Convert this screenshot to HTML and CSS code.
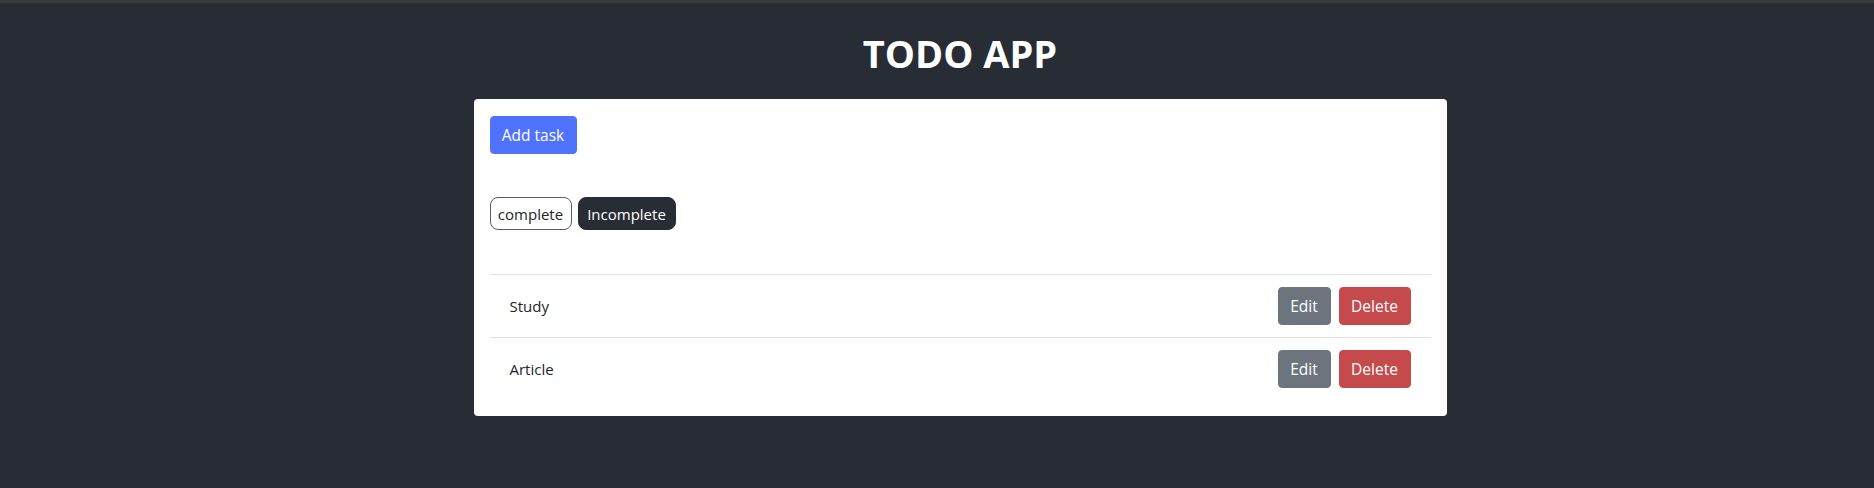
FILE: index.html
```html
<!DOCTYPE html>
<html lang="en">
<head>
<meta charset="utf-8">
<title>TODO APP</title>
<link rel="stylesheet" href="styles.css">
</head>
<body>
  <h1 class="title">TODO APP</h1>
  <main class="card">
    <button class="btn btn-primary">Add task</button>
    <div class="filters">
      <button class="chip chip-outline">complete</button>
      <button class="chip chip-dark">Incomplete</button>
    </div>
    <ul class="list">
      <li class="item">
        <span class="item-text">Study</span>
        <div class="actions">
          <button class="btn btn-secondary">Edit</button>
          <button class="btn btn-danger">Delete</button>
        </div>
      </li>
      <li class="item">
        <span class="item-text">Article</span>
        <div class="actions">
          <button class="btn btn-secondary">Edit</button>
          <button class="btn btn-danger">Delete</button>
        </div>
      </li>
    </ul>
  </main>
</body>
</html>
```
FILE: styles.css
```css
* { box-sizing: border-box; }
html, body { height: 100%; }
body {
  margin: 0;
  padding-left: 46px;
  border-top: 3px solid #3a3a3b;
  background: #282c35;
  font-family: "Open Sans", "Noto Sans", sans-serif;
  color: #212529;
  display: flex;
  flex-direction: column;
  align-items: center;
}
.title {
  margin: 26px 0 22px;
  font-size: 38px;
  line-height: 48px;
  font-weight: 700;
  color: #ffffff;
}
.card {
  width: 973px;
  background: #ffffff;
  border-radius: 4px;
  padding: 17px 16px 16px;
  display: flex;
  flex-direction: column;
  align-items: flex-start;
}
.btn {
  font-family: inherit;
  font-size: 15.5px;
  line-height: 24px;
  height: 38px;
  padding: 6px 0;
  border: 1px solid transparent;
  border-radius: 4px;
  color: #ffffff;
  cursor: pointer;
}
.btn-primary { background: #4f72ff; border-color: #4f72ff; width: 87px; }
.btn-secondary { background: #6c757d; border-color: #6c757d; width: 53px; }
.btn-danger { background: #c44a4b; border-color: #c44a4b; width: 72px; }
.filters {
  margin-top: 43px;
  display: flex;
  gap: 6px;
}
.chip {
  font-family: inherit;
  font-size: 15px;
  line-height: 24px;
  height: 33px;
  padding: 3px 0;
  border-radius: 8px;
  border: 1px solid #585c63;
  cursor: pointer;
}
.chip-outline { background: #ffffff; color: #212529; width: 82px; }
.chip-dark { background: #282c35; border-color: #282c35; color: #ffffff; width: 98px; }
.list {
  list-style: none;
  margin: 44px 0 0;
  padding: 0;
  align-self: stretch;
}
.item {
  display: flex;
  justify-content: space-between;
  align-items: center;
  padding: 12px 20px;
  border-top: 1px solid #dee2e6;
}
.item-text { font-size: 15px; }
.actions { display: flex; gap: 8px; }
```
